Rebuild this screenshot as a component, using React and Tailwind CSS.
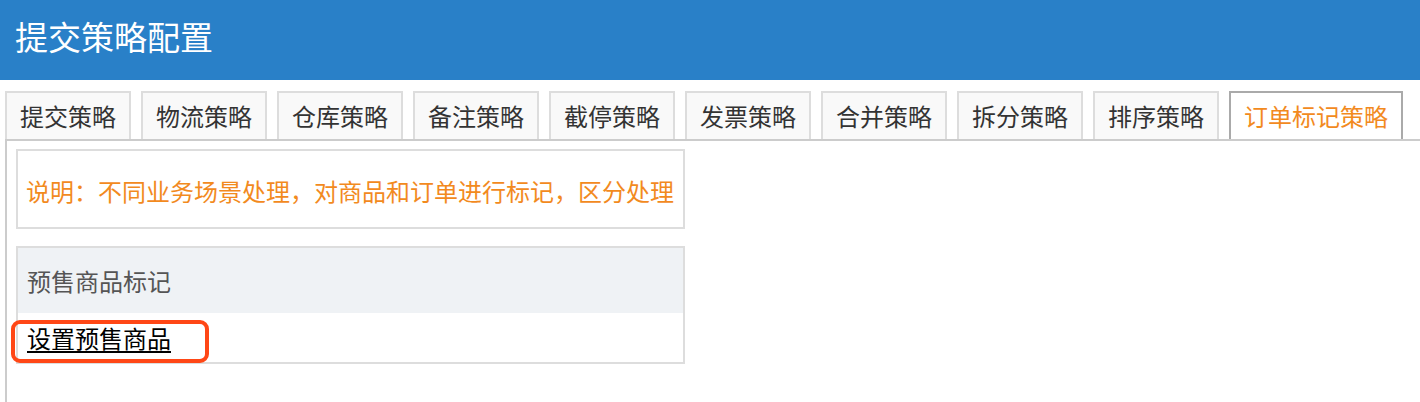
import React from 'react';

const tabs = ['提交策略', '物流策略', '仓库策略', '备注策略', '截停策略', '发票策略', '合并策略', '拆分策略', '排序策略', '订单标记策略'];

const App = () => {
  const active = tabs.length - 1;

  return (
    <div className="w-[1420px] h-[402px] bg-white overflow-hidden" style={{ fontFamily: '"Noto Sans CJK SC", "Noto Sans", sans-serif' }}>
      {/* header */}
      <div className="h-[80px] bg-[#2980c8] flex items-center px-[15px] pb-2">
        <h1 className="text-[33px] leading-none text-white">提交策略配置</h1>
      </div>

      {/* tabs */}
      <div className="flex gap-[10px] pl-[5px] mt-[11px]">
        {tabs.map((t, i) => (
          <div
            key={t}
            className={
              i === active
                ? 'h-[48px] px-[13px] border-2 border-b-0 border-[#aaaaaa] bg-white text-[#f28a1e] text-[24px] leading-none flex items-center'
                : 'h-[48px] px-[13px] border-2 border-b-0 border-[#dddddd] bg-[#f9f9f9] text-[#333333] text-[24px] leading-none flex items-center'
            }
          >
            {t}
          </div>
        ))}
      </div>

      {/* content */}
      <div className="ml-[5px] border-t-2 border-l-2 border-[#cccccc] h-[300px] pt-[8px] pl-[9px]">
        <div className="w-[669px] h-[80px] border-2 border-[#dddddd] flex items-center pl-[8px] pt-[4px]">
          <p className="text-[24px] leading-none text-[#f28a1e]">说明：不同业务场景处理，对商品和订单进行标记，区分处理</p>
        </div>

        <div className="w-[669px] mt-[17px] border-2 border-[#dddddd]">
          <div className="h-[65px] bg-[#eff2f5] flex items-center pl-[9px]">
            <span className="text-[24px] leading-none text-[#555555]">预售商品标记</span>
          </div>
          <div className="relative h-[49px] flex items-center pl-[9px]">
            <a href="#" className="text-[24px] leading-none text-black underline underline-offset-[3px]">设置预售商品</a>
            <div className="absolute left-[-7px] top-[7px] w-[198px] h-[43px] border-[4px] border-[#ff4716] rounded-[9px]" />
          </div>
        </div>
      </div>
    </div>
  );
};

export default App;
